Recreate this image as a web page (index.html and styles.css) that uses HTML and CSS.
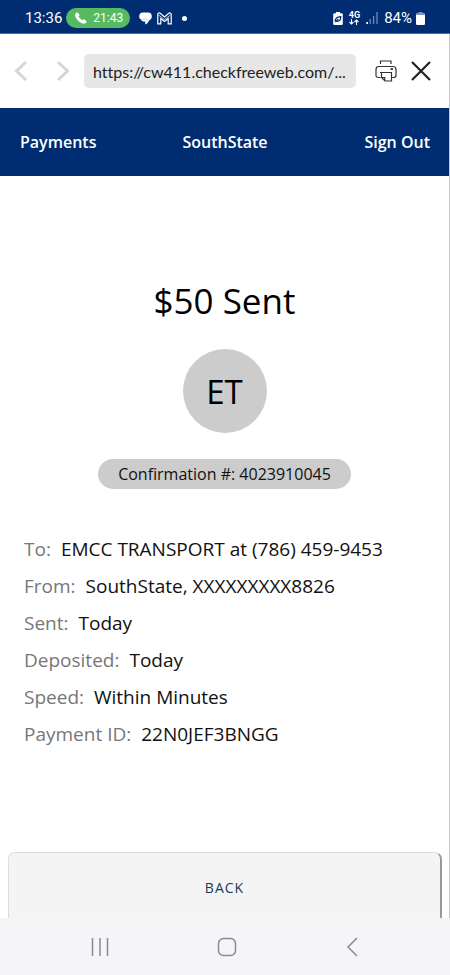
FILE: index.html
```html
<!DOCTYPE html>
<html lang="en">
<head>
<meta charset="utf-8">
<meta name="viewport" content="width=device-width, initial-scale=1">
<title>Payment sent</title>
<link rel="stylesheet" href="styles.css">
</head>
<body>
<div class="status">
  <div class="status-group">
    <span>13:36</span>
    <span class="call">
      <svg width="12" height="12" viewBox="0 0 12 12" aria-hidden="true"><path d="M.6 1.5C1.5.3 2.7.2 3.3 1l1 1.700c.3.6.1 1-.5 1.700-.2.7 2.600 3.600 3.500 3.600.6-.5 1.100-.7 1.700-.4l1.900 1c.8.5.7 1.400-.1 2.300-.8.9-2.600 1-4.800-.2C3.200 9.200.9 6.600.2 4.200-.1 3.100.1 2.200.6 1.500z" fill="#fff"/></svg>
      21:43
    </span>
    <svg class="chat" width="13" height="13" viewBox="0 0 13 13" aria-hidden="true"><path d="M4 .5h5a4 4 0 0 1 3.800 4c0 2-1.200 3.400-2.800 3.900-.3 1.500-1.600 3-3.800 4V9.500H4.500C2.800 9.300 2.200 8.400 2 7.600.8 7.100.2 6 .2 4.500A4 4 0 0 1 4 .5z" fill="#fff"/><path d="M2.500 7.400h6.800" stroke="#b3c2dc" stroke-width=".7"/></svg>
    <svg width="15" height="13" viewBox="0 0 15 13" aria-hidden="true"><path d="M.8 11.800V2.300C.8.900 2.200.500 3.200 1.300l4.300 3.600 4.300-3.600c1-.8 2.400-.4 2.400 1v9.500h-3V6.500L7.500 9.400 3.800 6.500v5.300z" fill="none" stroke="#fff" stroke-width="1.200"/><path d="M1.500 3l6 4.500 6-4.500" fill="none" stroke="#fff" stroke-width=".7"/></svg>
    <span class="dot"></span>
  </div>
  <div class="status-group status-right">
    <svg width="10" height="13" viewBox="0 0 10 13" aria-hidden="true"><path d="M3 0h4v1.300h1.500a1.300 1.300 0 0 1 1.300 1.300v9A1.300 1.300 0 0 1 8.500 13h-7A1.300 1.300 0 0 1 .2 11.600v-9a1.300 1.300 0 0 1 1.300-1.300H3z" fill="#fff"/><path d="M2.300 9.500C2 6.500 4 5 7.700 4.700c.2 3.300-1.400 5-4.200 4.300M2.500 10l2.800-2.800" fill="none" stroke="#002d72" stroke-width="1.300"/></svg>
    <span class="network"><span>4G</span>
      <svg width="10" height="6" viewBox="0 0 10 6" aria-hidden="true"><path d="M2.500 0v5M.5 3l2 2 2-2M7.500 6V1M5.500 3l2-2 2 2" fill="none" stroke="#fff" stroke-width="1.100"/></svg>
    </span>
    <svg width="12" height="12" viewBox="0 0 12 12" aria-hidden="true"><path d="M.3 10h1.700v2H.3z" fill="#fff"/><path d="M4.200 12V7M7.600 12V4M11 12V0" stroke="#7187b3" stroke-width="1.300"/></svg>
    <span class="percent">84%</span>
    <svg width="9" height="13" viewBox="0 0 9 13" aria-hidden="true"><path d="M2.500 0h4v1H8a1 1 0 0 1 1 1v2H0V2a1 1 0 0 1 1-1h1.500z" fill="#8193bb"/><path d="M0 3h9v8.800A1.200 1.200 0 0 1 7.800 13H1.200A1.200 1.200 0 0 1 0 11.800z" fill="#fff"/></svg>
  </div>
</div>

<div class="page">
  <div class="toolbar">
    <button class="icon-button" type="button" aria-label="Previous page"><svg width="14" height="22" viewBox="0 0 14 22"><path d="M12 2L2.500 11 12 20" fill="none" stroke="#d6d6d6" stroke-width="3"/></svg></button>
    <button class="icon-button forward" type="button" aria-label="Next page"><svg width="14" height="22" viewBox="0 0 14 22"><path d="M2 2l9.500 9L2 20" fill="none" stroke="#d6d6d6" stroke-width="3"/></svg></button>
    <input class="address" type="text" aria-label="Address" value="https://cw411.checkfreeweb.com/..." readonly>
    <button class="icon-button print" type="button" aria-label="Print"><svg width="22" height="22" viewBox="0 0 22 22" fill="none" stroke="#333" stroke-width="1.200"><path d="M5.500 4V1h10.500v3M5.500 17.500H3.300Q1 17.500 1 15.200V9.500Q1 6.500 4 6.500h14q3 0 3 3v5.700q0 2.300-2.300 2.300h-2.200M5 12.500h12M6.500 12.500v5l3.500 3.500h6.500v-8.500M6.500 17.500h3.300V21"/><path d="M15.500 9h2.500" stroke-width="1.800"/></svg></button>
    <button class="icon-button" type="button" aria-label="Close"><svg width="20" height="20" viewBox="0 0 20 20"><path d="M1 1l18 18M19 1L1 19" fill="none" stroke="#222" stroke-width="2.200"/></svg></button>
  </div>

  <header class="header">
    <a href="#payments">Payments</a>
    <span>SouthState</span>
    <a href="#signout">Sign Out</a>
  </header>

  <main class="main">
    <h1 class="title">$50 Sent</h1>
    <div class="avatar">ET</div>
    <p class="confirmation">Confirmation #: 4023910045</p>
    <dl class="details">
      <div><dt>To:</dt><dd>EMCC TRANSPORT at (786) 459-9453</dd></div>
      <div><dt>From:</dt><dd>SouthState, XXXXXXXXX8826</dd></div>
      <div><dt>Sent:</dt><dd>Today</dd></div>
      <div><dt>Deposited:</dt><dd>Today</dd></div>
      <div><dt>Speed:</dt><dd>Within Minutes</dd></div>
      <div><dt>Payment ID:</dt><dd>22N0JEF3BNGG</dd></div>
    </dl>
  </main>
  <button class="back" type="button">BACK</button>
</div>

<nav class="system" aria-label="System">
  <button class="icon-button" type="button" aria-label="Recent apps"><svg width="18" height="18" viewBox="0 0 18 18"><path d="M1.500 0v18M9 0v18M16.500 0v18" stroke="#8b8b8d" stroke-width="1.500"/></svg></button>
  <button class="icon-button" type="button" aria-label="Home"><svg width="20" height="20" viewBox="0 0 20 20"><rect x="1.500" y="1.500" width="17" height="17" rx="5" fill="none" stroke="#8b8b8d" stroke-width="1.500"/></svg></button>
  <button class="icon-button" type="button" aria-label="Back"><svg width="14" height="20" viewBox="0 0 14 20"><path d="M12 1L3 10l9 9" fill="none" stroke="#8b8b8d" stroke-width="1.500"/></svg></button>
</nav>
</body>
</html>
```
FILE: styles.css
```css
* {
  box-sizing: border-box;
}

body {
  margin: 0;
  min-height: 100vh;
  display: flex;
  flex-direction: column;
  background: #fff;
  color: #111;
  font-family: "Open Sans", sans-serif;
}

button {
  font: inherit;
  cursor: pointer;
}

svg {
  display: block;
}

.icon-button {
  display: flex;
  padding: 0;
  border: 0;
  background: none;
}

.status {
  display: flex;
  justify-content: space-between;
  align-items: center;
  padding: 3px 25px 0;
  height: 34px;
  background: #002d72;
  color: #fff;
  font: 15px/20px Roboto, sans-serif;
  border-bottom: 1px solid #4c6ea0;
}

.status-group {
  display: flex;
  align-items: center;
  gap: 4px;
}

.status-right {
  gap: 6px;
}

.call {
  display: flex;
  align-items: center;
  gap: 6px;
  height: 20px;
  padding: 0 7px 0 9px;
  border-radius: 10px;
  background: #56bb60;
  font-size: 12px;
}

.chat {
  margin: 0 1px 0 5px;
}

.dot {
  width: 5px;
  height: 5px;
  margin-left: 6px;
  border-radius: 50%;
  background: #fff;
}

.network {
  display: flex;
  flex-direction: column;
  align-items: center;
  font-size: 9px;
  line-height: 8px;
  font-weight: 700;
}

.percent {
  margin-right: -2px;
}

.page {
  flex: 1;
  display: flex;
  flex-direction: column;
  border-right: 1px solid #c8c8c8;
}

.toolbar {
  display: flex;
  align-items: center;
  height: 74px;
  padding: 0 18px 0 14px;
}

.forward {
  margin-left: 28px;
}

.address {
  flex: 1;
  min-width: 0;
  height: 34px;
  margin: 0 19px 0 14px;
  padding: 0 9px;
  border: 0;
  border-radius: 5px;
  background: #e7e7e7;
  color: #222;
  font: 16px Lato, sans-serif;
  font-variant-ligatures: none;
}

.print {
  margin-right: 14px;
}

.header {
  display: grid;
  grid-template-columns: 1fr auto 1fr;
  align-items: center;
  height: 68px;
  padding: 0 19px 0 20px;
  background: #002d72;
  color: #fff;
  font-size: 16px;
  font-weight: 600;
}

.header a {
  color: inherit;
  text-decoration: none;
}

.header a:last-child {
  text-align: right;
}

.main {
  flex: 1;
  display: flex;
  flex-direction: column;
  align-items: center;
  padding: 101px 24px 0;
}

.title {
  margin: 0;
  color: #000;
  font-size: 35px;
  line-height: 48px;
  font-weight: 400;
}

.avatar {
  display: grid;
  place-items: center;
  width: 84px;
  height: 84px;
  margin-top: 24px;
  border-radius: 50%;
  background: #ccc;
  color: #000;
  font-size: 33px;
}

.confirmation {
  margin: 26px 0 0;
  padding: 0 20px;
  border-radius: 15px;
  background: #ccc;
  font-size: 16px;
  line-height: 30px;
}

.details {
  align-self: stretch;
  margin: 42px 0 0;
  font-size: 19px;
  line-height: 37px;
}

.details div {
  display: flex;
  gap: 10px;
}

.details dt {
  color: #777;
}

.details dd {
  margin: 0;
}

.back {
  height: 66px;
  margin: 0 7px 0 8px;
  padding: 4px 0 0;
  border: 1px solid #ddd;
  border-right: 2px solid #999;
  border-bottom: 0;
  border-radius: 7px 7px 0 0;
  background: #f4f4f4;
  color: #173a5e;
  font-size: 14px;
  letter-spacing: 1px;
}

.system {
  display: flex;
  justify-content: space-between;
  align-items: center;
  height: 57px;
  padding: 0 91px;
  background: #f5f5f8;
}
```
